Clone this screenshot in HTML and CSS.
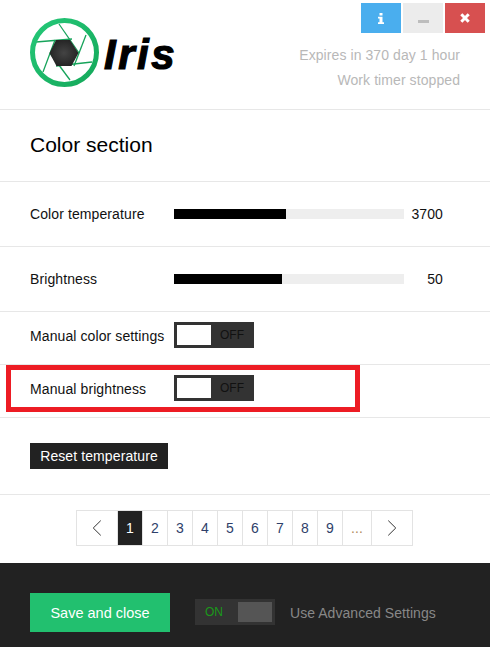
FILE: index.html
```html
<!DOCTYPE html>
<html lang="en">
<head>
<meta charset="utf-8">
<title>Iris</title>
<link rel="stylesheet" href="styles.css">
</head>
<body>
<div class="app">
  <header class="header">
    <div class="brand">
      <svg class="logo" width="70" height="70" viewBox="30 18 70 70" aria-hidden="true">
        <defs>
          <radialGradient id="hex" cx="50%" cy="50%" r="55%">
            <stop offset="0" stop-color="#444"/>
            <stop offset="1" stop-color="#222"/>
          </radialGradient>
          <linearGradient id="ring" x1="0" y1="0" x2="1" y2="1">
            <stop offset="0" stop-color="#25c878"/>
            <stop offset="1" stop-color="#14a85a"/>
          </linearGradient>
        </defs>
        <g stroke="#16a35a" stroke-width="1.3" fill="none">
          <path d="M59 24 79 53"/>
          <path d="M86 35 74 66"/>
          <path d="M92 62 56 66"/>
          <path d="M70 80 50 53"/>
          <path d="M43 72 55 40"/>
          <path d="M36 42 72 39"/>
        </g>
        <polygon points="56,40 70,40 78.5,53 71.5,66 56.5,66 49.5,53" fill="url(#hex)"/>
        <circle cx="64.5" cy="52.5" r="32" fill="none" stroke="url(#ring)" stroke-width="5"/>
      </svg>
      <span class="wordmark">Iris</span>
    </div>
    <div class="status">
      <div class="controls">
        <button class="ctl ctl-info" type="button" aria-label="Info">
          <svg width="6" height="11" viewBox="0 0 6 11"><path d="M1.500 0h3v2.500h-3zM0 3.700h4.500v5.600H6V11H0V9.300h1.500V5.400H0z" fill="#fff"/></svg>
        </button>
        <button class="ctl ctl-min" type="button" aria-label="Minimize">
          <svg class="ctl-min-icon" width="11" height="3" viewBox="0 0 11 3"><rect width="11" height="3" fill="#bdbdbd"/></svg>
        </button>
        <button class="ctl ctl-close" type="button" aria-label="Close">
          <svg width="10" height="10" viewBox="0 0 10 10"><path d="M1.300 1.300 8.700 8.700M8.700 1.300 1.300 8.700" stroke="#fff" stroke-width="3" fill="none"/></svg>
        </button>
      </div>
      <p class="status-line">Expires in 370 day 1 hour</p>
      <p class="status-line">Work timer stopped</p>
    </div>
  </header>

  <section class="row row-title"><h1 class="title">Color section</h1></section>

  <section class="row row-slider">
    <span class="label">Color temperature</span>
    <div class="slider"><div class="fill fill-temp"></div></div>
    <span class="value">3700</span>
  </section>

  <section class="row row-slider">
    <span class="label">Brightness</span>
    <div class="slider"><div class="fill fill-bright"></div></div>
    <span class="value">50</span>
  </section>

  <section class="row row-toggle">
    <span class="label">Manual color settings</span>
    <div class="toggle"><span class="knob"></span><span class="toggle-text">OFF</span></div>
  </section>

  <section class="row row-toggle row-marked">
    <span class="label">Manual brightness</span>
    <div class="toggle"><span class="knob"></span><span class="toggle-text">OFF</span></div>
    <div class="highlight"></div>
  </section>

  <section class="row row-reset">
    <button class="reset" type="button">Reset temperature</button>
  </section>

  <nav class="pager-wrap">
    <ul class="pager">
      <li class="cell cell-arrow"><svg width="12" height="16" viewBox="0 0 12 16"><path d="M9.750 .6 2.250 8l7.500 7.400" fill="none" stroke="#333" stroke-width="1"/></svg></li>
      <li class="cell cell-active">1</li>
      <li class="cell">2</li>
      <li class="cell">3</li>
      <li class="cell">4</li>
      <li class="cell">5</li>
      <li class="cell">6</li>
      <li class="cell">7</li>
      <li class="cell">8</li>
      <li class="cell">9</li>
      <li class="cell cell-more">...</li>
      <li class="cell cell-last"><svg width="12" height="16" viewBox="0 0 12 16"><path d="M2.250 .6 9.750 8l-7.500 7.400" fill="none" stroke="#333" stroke-width="1"/></svg></li>
    </ul>
  </nav>

  <footer class="footer">
    <button class="save" type="button">Save and close</button>
    <div class="adv-toggle"><span class="adv-on">ON</span><span class="adv-knob"></span></div>
    <span class="adv-label">Use Advanced Settings</span>
  </footer>
</div>
</body>
</html>
```

FILE: styles.css
```css
* { box-sizing: border-box; }

html, body {
  margin: 0;
  padding: 0;
  background: #fff;
}

body {
  font-family: "Liberation Sans", Arial, sans-serif;
  font-size: 14px;
  letter-spacing: .1px;
  color: #111;
}

.app {
  width: 490px;
  height: 647px;
  overflow: hidden;
  display: flex;
  flex-direction: column;
}

.header {
  height: 110px;
  flex: none;
  display: flex;
  justify-content: space-between;
  border-bottom: 1px solid #e7e7e7;
  padding: 3px 30px 0 30px;
}

.brand {
  display: flex;
  align-items: flex-start;
  padding-top: 15px;
}

.logo { display: block; flex: none; }

.wordmark {
  font-weight: bold;
  font-style: italic;
  font-size: 42px;
  line-height: 48px;
  letter-spacing: 2.5px;
  -webkit-text-stroke: 1.2px #000;
  color: #000;
  margin: 13px 0 0 4px;
}

.status {
  display: flex;
  flex-direction: column;
  align-items: flex-end;
}

.controls {
  display: flex;
  gap: 2px;
  margin-right: -25px;
  margin-bottom: 10px;
}

.ctl {
  width: 40px;
  height: 30px;
  border: 0;
  padding: 0;
  display: flex;
  align-items: center;
  justify-content: center;
}

.ctl-info { background: #4aaeee; }
.ctl-min { background: #ececec; }
.ctl-close { background: #d75050; }
.ctl-min-icon { margin-top: 7px; }

.status-line {
  margin: 0;
  height: 25px;
  line-height: 25px;
  color: #b8b8b8;
  letter-spacing: .08px;
}

.row {
  flex: none;
  display: flex;
  align-items: center;
  padding: 0 30px;
  border-bottom: 1px solid #e7e7e7;
}

.row-title {
  height: 72px;
  padding-bottom: 2px;
}
.row-slider { height: 65px; }
.row-toggle {
  height: 53px;
  padding-bottom: 6px;
}
.row-reset { height: 77px; }

.row-marked { position: relative; }

.row-toggle .label { margin-top: 2px; }

.highlight {
  position: absolute;
  left: 6px;
  top: 0;
  width: 354px;
  height: 47px;
  border: 5px solid #ed1c24;
}

.title {
  margin: 0;
  font-size: 21px;
  font-weight: normal;
  letter-spacing: 0;
  color: #000;
}

.label {
  width: 144px;
  flex: none;
}

.slider {
  width: 230px;
  height: 10px;
  flex: none;
  background: #eee;
}

.fill {
  height: 100%;
  background: #000;
}

.fill-temp { width: 112px; }
.fill-bright { width: 108px; }

.value {
  width: 39px;
  flex: none;
  text-align: right;
}

.toggle {
  width: 80px;
  height: 26px;
  flex: none;
  background: #333;
  padding: 3px 10px 3px 3px;
  display: flex;
  align-items: center;
  justify-content: space-between;
}

.knob {
  width: 34px;
  height: 20px;
  background: #fff;
}

.toggle-text {
  font-size: 12px;
  letter-spacing: 0;
  color: #111;
}

.reset {
  width: 138px;
  height: 26px;
  border: 0;
  padding: 0;
  background: #222;
  color: #fff;
  font-family: inherit;
  font-size: 14px;
  letter-spacing: .1px;
}

.pager-wrap {
  flex: none;
  height: 68px;
  padding-top: 15px;
  display: flex;
  justify-content: center;
}

.pager {
  list-style: none;
  margin: 0 0 0 -1px;
  padding: 0;
  height: 36px;
  display: flex;
  border: 1px solid #e3e3e3;
}

.cell {
  width: 25px;
  display: flex;
  align-items: center;
  justify-content: center;
  border-right: 1px solid #e3e3e3;
  color: #2f3f6a;
}

.cell-arrow { width: 41px; }

.cell-last {
  width: 40px;
  border-right: 0;
}

.cell-active {
  background: #222;
  color: #fff;
}

.cell-more {
  width: 29px;
  color: #b08a60;
}

.footer {
  flex: 1;
  background: #222;
  display: flex;
  align-items: center;
  padding: 15px 30px 0 30px;
}

.save {
  width: 140px;
  height: 39px;
  flex: none;
  border: 0;
  padding: 0;
  background: #22c06f;
  color: #fff;
  font-family: inherit;
  font-size: 14.5px;
  letter-spacing: 0;
}

.adv-toggle {
  width: 80px;
  height: 26px;
  flex: none;
  margin: 0 0 1px 25px;
  background: #333;
  padding: 3px 3px 3px 10px;
  display: flex;
  align-items: center;
  justify-content: space-between;
}

.adv-on {
  font-size: 12px;
  letter-spacing: 0;
  color: #1a9a1a;
}

.adv-knob {
  width: 34px;
  height: 20px;
  background: #555;
}

.adv-label {
  margin-left: 15px;
  letter-spacing: .05px;
  color: #888;
}
```
